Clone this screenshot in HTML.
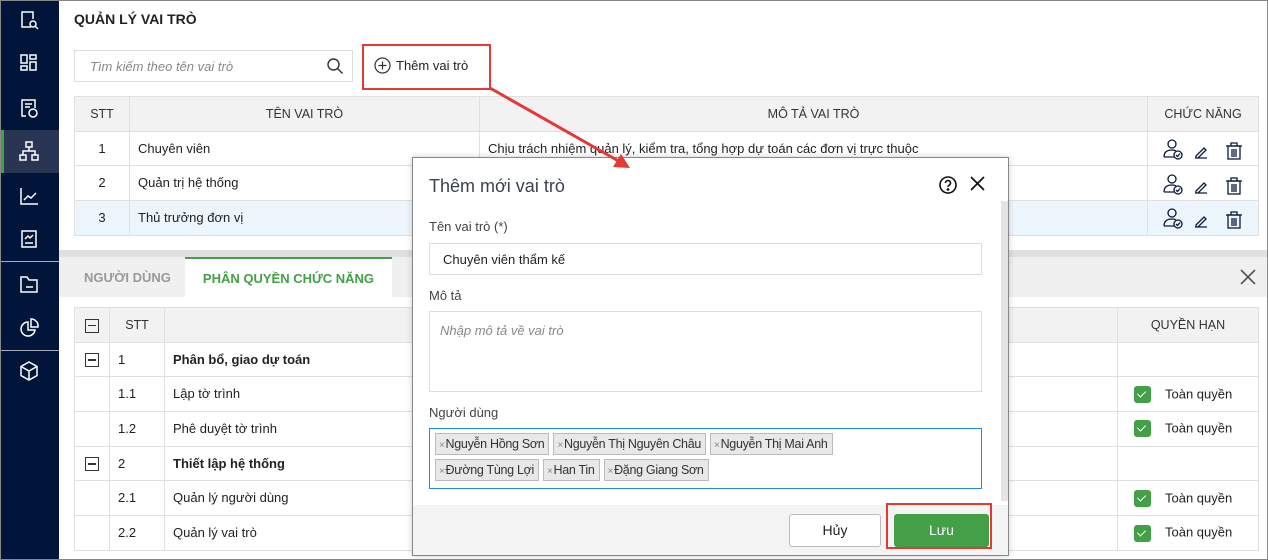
<!DOCTYPE html>
<html><head><meta charset="utf-8"><style>
*{box-sizing:border-box;margin:0;padding:0}
body{width:1268px;height:560px;overflow:hidden;font-family:"Liberation Sans",sans-serif;font-size:13px;color:#222;background:#fff;position:relative}
.a{position:absolute}
.sb{left:0;top:0;width:59px;height:560px;background:#01143a}
.ic{position:absolute;left:18px;width:22px;height:22px}
.ic svg{width:22px;height:22px;fill:none;stroke:#fff;stroke-width:1.5}
table{border-collapse:collapse;position:absolute;table-layout:fixed}
td,th{border:1px solid #e0e0e0;height:34.7px;padding:0 8px;font-weight:normal;font-size:13px;line-height:16px}
th{background:#f2f2f2;color:#333;font-size:12.5px}
.c{text-align:center}
.cb{display:inline-block;width:14px;height:14px;border:1.5px solid #333;vertical-align:middle;position:relative}
.cb:after{content:"";position:absolute;left:2px;right:2px;top:5px;height:1.5px;background:#333}
.gc{display:inline-block;width:17px;height:17px;background:#43a047;border-radius:3px;vertical-align:middle;margin-right:14px;position:relative}
.gc:after{content:"";position:absolute;left:5px;top:3px;width:4px;height:7px;border:solid #fff;border-width:0 1.5px 1.5px 0;transform:rotate(45deg)}
.q{white-space:nowrap}
.q span.t{vertical-align:middle}
.tag{display:inline-block;background:#e8e8e8;border:1px solid #bbb;height:22px;line-height:20px;padding:0 4px 0 3px;margin:4px 1px 0 3px;font-size:12.5px;letter-spacing:-0.3px;color:#333}
.tag b{font-weight:normal;color:#888;font-size:10px;margin-right:1px}
</style></head><body>
<div style="position:absolute;inset:0;border:1px solid #888;z-index:50;pointer-events:none"></div>
<div class="a sb">
 <div class="a" style="left:0;top:130px;width:59px;height:43px;background:#2a3553"></div>
 <div class="a" style="left:0;top:130px;width:4px;height:43px;background:#43a047"></div>
 <div class="a" style="left:0;top:261px;width:59px;height:1px;background:#aab"></div>
 <div class="a" style="left:0;top:350px;width:59px;height:1px;background:#aab"></div>
 <div class="ic" style="top:9px"><svg viewBox="0 0 22 22"><path d="M13 18H4V3h11v7"/><circle cx="15" cy="15" r="3"/><path d="M17 17l3 3"/></svg></div>
 <div class="ic" style="top:52px"><svg viewBox="0 0 22 22"><rect x="3" y="3" width="6" height="8"/><rect x="3" y="14" width="6" height="4"/><rect x="12" y="3" width="6" height="4"/><rect x="12" y="10" width="6" height="8"/></svg></div>
 <div class="ic" style="top:97px"><svg viewBox="0 0 22 22"><path d="M8 19H4V3h13v8"/><path d="M7 7h7M7 10h5"/><circle cx="15" cy="16" r="4"/></svg></div>
 <div class="ic" style="top:140px"><svg viewBox="0 0 22 22"><rect x="8" y="2" width="6" height="5"/><rect x="2" y="15" width="6" height="5"/><rect x="14" y="15" width="6" height="5"/><path d="M11 7v4M5 15v-4h12v4"/></svg></div>
 <div class="ic" style="top:185px"><svg viewBox="0 0 22 22"><path d="M3 3v16h17M6 15l4-4 3 2 5-5"/></svg></div>
 <div class="ic" style="top:228px"><svg viewBox="0 0 22 22"><rect x="4" y="3" width="14" height="16"/><path d="M7 11l3-3 2 2 3-3M7 15h8"/></svg></div>
 <div class="ic" style="top:273px"><svg viewBox="0 0 22 22"><path d="M3 19V4h6l2 3h8v12z"/><path d="M8 14h7"/></svg></div>
 <div class="ic" style="top:317px"><svg viewBox="0 0 22 22"><path d="M10 5a7 7 0 1 0 7 8h-7z"/><path d="M13 2a7 7 0 0 1 7 8h-7z"/></svg></div>
 <div class="ic" style="top:360px"><svg viewBox="0 0 22 22"><path d="M11 2l8 4.5v9L11 20l-8-4.5v-9z"/><path d="M3 6.5l8 4.5 8-4.5M11 11v9"/></svg></div>
</div>

<div class="a" style="left:74px;top:11px;font-weight:bold;font-size:14px;color:#222">QUẢN LÝ VAI TRÒ</div>
<div class="a" style="left:74px;top:50px;width:279px;height:32px;border:1px solid #ddd;padding:8px 15px;font-style:italic;color:#888">Tìm kiếm theo tên vai trò
 <svg style="position:absolute;right:8px;top:6px" width="18" height="18" viewBox="0 0 18 18" fill="none" stroke="#333" stroke-width="1.4"><circle cx="7.5" cy="7.5" r="5.5"/><path d="M11.5 11.5l5 5"/></svg></div>
<div class="a" style="left:362px;top:44px;width:129px;height:46px;border:2px solid #e53935"></div>
<svg class="a" style="left:374px;top:57px" width="17" height="17" viewBox="0 0 17 17" fill="none" stroke="#333" stroke-width="1.2"><circle cx="8.5" cy="8.5" r="7.5"/><path d="M8.5 4.5v8M4.5 8.5h8"/></svg>
<div class="a" style="left:396px;top:58px;color:#222">Thêm vai trò</div>

<table style="left:74px;top:96px;width:1184px">
<colgroup><col style="width:55px"><col style="width:350px"><col style="width:668px"><col style="width:111px"></colgroup>
<tr><th>STT</th><th>TÊN VAI TRÒ</th><th>MÔ TẢ VAI TRÒ</th><th>CHỨC NĂNG</th></tr>
<tr><td class="c">1</td><td>Chuyên viên</td><td>Chịu trách nhiệm quản lý, kiểm tra, tổng hợp dự toán các đơn vị trực thuộc</td><td></td></tr>
<tr><td class="c">2</td><td>Quản trị hệ thống</td><td></td><td></td></tr>
<tr style="background:#eef6fd"><td class="c">3</td><td>Thủ trưởng đơn vị</td><td></td><td></td></tr>
</table>
<div class="a" style="left:1162px;top:138px">
<svg width="90" height="100" viewBox="0 0 90 100" fill="none" stroke="#0a1a3a" stroke-width="1.3">
<g id="r"><circle cx="10" cy="6" r="4"/><path d="M2 19c0-5 3-7 8-7 2 0 3 .3 4 1M2 19h10"/><circle cx="16" cy="17" r="4"/><path d="M14 17l1.5 1.5 2.5-3"/><path d="M34 18l8-8 2 2-8 8h-2zM33 20h12"/><rect x="66" y="8" width="12" height="13"/><path d="M64 8h16M69 8V5h6v3M70 11v8M72 11v8M74 11v8"/></g>
<use href="#r" y="35"/><use href="#r" y="69"/></svg></div>

<div class="a" style="left:59px;top:250px;width:1209px;height:8px;background:#e0e0e0"></div>
<div class="a" style="left:59px;top:257px;width:1209px;height:40px;background:#f0f0f0"></div>
<div class="a" style="left:84px;top:270px;color:#999;font-weight:bold;font-size:13px">NGƯỜI DÙNG</div>
<div class="a" style="left:185px;top:257px;width:207px;height:40px;background:#fff;border-top:2px solid #43a047;text-align:center;padding-top:12px;color:#43a047;font-weight:bold">PHÂN QUYỀN CHỨC NĂNG</div>
<svg class="a" style="left:1240px;top:269px" width="16" height="16" viewBox="0 0 16 16" stroke="#555" stroke-width="1.6"><path d="M1 1l14 14M15 1L1 15"/></svg>

<table style="left:74px;top:307px;width:1184px">
<colgroup><col style="width:35px"><col style="width:55px"><col style="width:953px"><col style="width:141px"></colgroup>
<tr><th class="c" style="background:#f2f2f2"><span class="cb"></span></th><th>STT</th><th></th><th>QUYỀN HẠN</th></tr>
<tr><td class="c"><span class="cb"></span></td><td>1</td><td style="font-weight:bold">Phân bổ, giao dự toán</td><td></td></tr>
<tr><td></td><td>1.1</td><td>Lập tờ trình</td><td class="q" style="padding-left:16px"><span class="gc"></span><span class="t">Toàn quyền</span></td></tr>
<tr><td></td><td>1.2</td><td>Phê duyệt tờ trình</td><td class="q" style="padding-left:16px"><span class="gc"></span><span class="t">Toàn quyền</span></td></tr>
<tr><td class="c"><span class="cb"></span></td><td>2</td><td style="font-weight:bold">Thiết lập hệ thống</td><td></td></tr>
<tr><td></td><td>2.1</td><td>Quản lý người dùng</td><td class="q" style="padding-left:16px"><span class="gc"></span><span class="t">Toàn quyền</span></td></tr>
<tr><td></td><td>2.2</td><td>Quản lý vai trò</td><td class="q" style="padding-left:16px"><span class="gc"></span><span class="t">Toàn quyền</span></td></tr>
</table>

<div class="a" style="left:412px;top:157px;width:597px;height:399px;background:#fff;border:1px solid #888;box-shadow:0 0 6px rgba(0,0,0,.2)">
 <div class="a" style="left:16px;top:18px;font-size:18px;color:#3a4250">Thêm mới vai trò</div>
 <svg class="a" style="left:526px;top:18px" width="18" height="18" viewBox="0 0 18 18" fill="none" stroke="#111" stroke-width="1.6"><circle cx="9" cy="9" r="8"/><path d="M6.5 7a2.5 2.5 0 1 1 3.5 2.3c-.7.4-1 .8-1 1.7"/><circle cx="9" cy="13.5" r=".6" fill="#111"/></svg>
 <svg class="a" style="left:557px;top:18px" width="15" height="15" viewBox="0 0 15 15" stroke="#111" stroke-width="1.7"><path d="M1 1l13 13M14 1L1 14"/></svg>
 <div class="a" style="left:588px;top:43px;width:7px;height:300px;background:#e4e4e4"></div>
 <div class="a" style="left:16px;top:61px;color:#444">Tên vai trò (*)</div>
 <div class="a" style="left:16px;top:85px;width:553px;height:32px;border:1px solid #ddd;padding:8px 13px;color:#222">Chuyên viên thẩm kế</div>
 <div class="a" style="left:16px;top:130px;color:#444">Mô tả</div>
 <div class="a" style="left:16px;top:153px;width:553px;height:81px;border:1px solid #ddd;padding:11px 10px;color:#888;font-style:italic">Nhập mô tả về vai trò</div>
 <div class="a" style="left:16px;top:247px;color:#444">Người dùng</div>
 <div class="a" style="left:16px;top:270px;width:553px;height:61px;border:1px solid #1e88e5;padding:0 2px">
  <span class="tag"><b>×</b>Nguyễn Hồng Sơn</span><span class="tag"><b>×</b>Nguyễn Thị Nguyên Châu</span><span class="tag"><b>×</b>Nguyễn Thị Mai Anh</span><br>
  <span class="tag"><b>×</b>Đường Tùng Lợi</span><span class="tag"><b>×</b>Han Tin</span><span class="tag"><b>×</b>Đặng Giang Sơn</span>
 </div>
 <div class="a" style="left:0;top:347px;width:595px;height:50px;background:#f4f4f4"></div>
 <div class="a" style="left:376px;top:356px;width:92px;height:33px;border:1px solid #bbb;border-radius:3px;background:#fff;text-align:center;line-height:31px;font-size:14px">Hủy</div>
 <div class="a" style="left:473px;top:345px;width:106px;height:46px;border:2px solid #e53935"></div>
 <div class="a" style="left:481px;top:356px;width:95px;height:33px;border-radius:3px;background:#43a047;color:#fff;text-align:center;line-height:33px;font-size:14px">Lưu</div>
</div>
<svg class="a" style="left:480px;top:80px;z-index:40" width="160" height="100" viewBox="0 0 160 100"><path d="M10 8L142 83" stroke="#e53935" stroke-width="3"/><path d="M150 88l-17-1 8-13z" fill="#e53935"/></svg>
</body></html>
